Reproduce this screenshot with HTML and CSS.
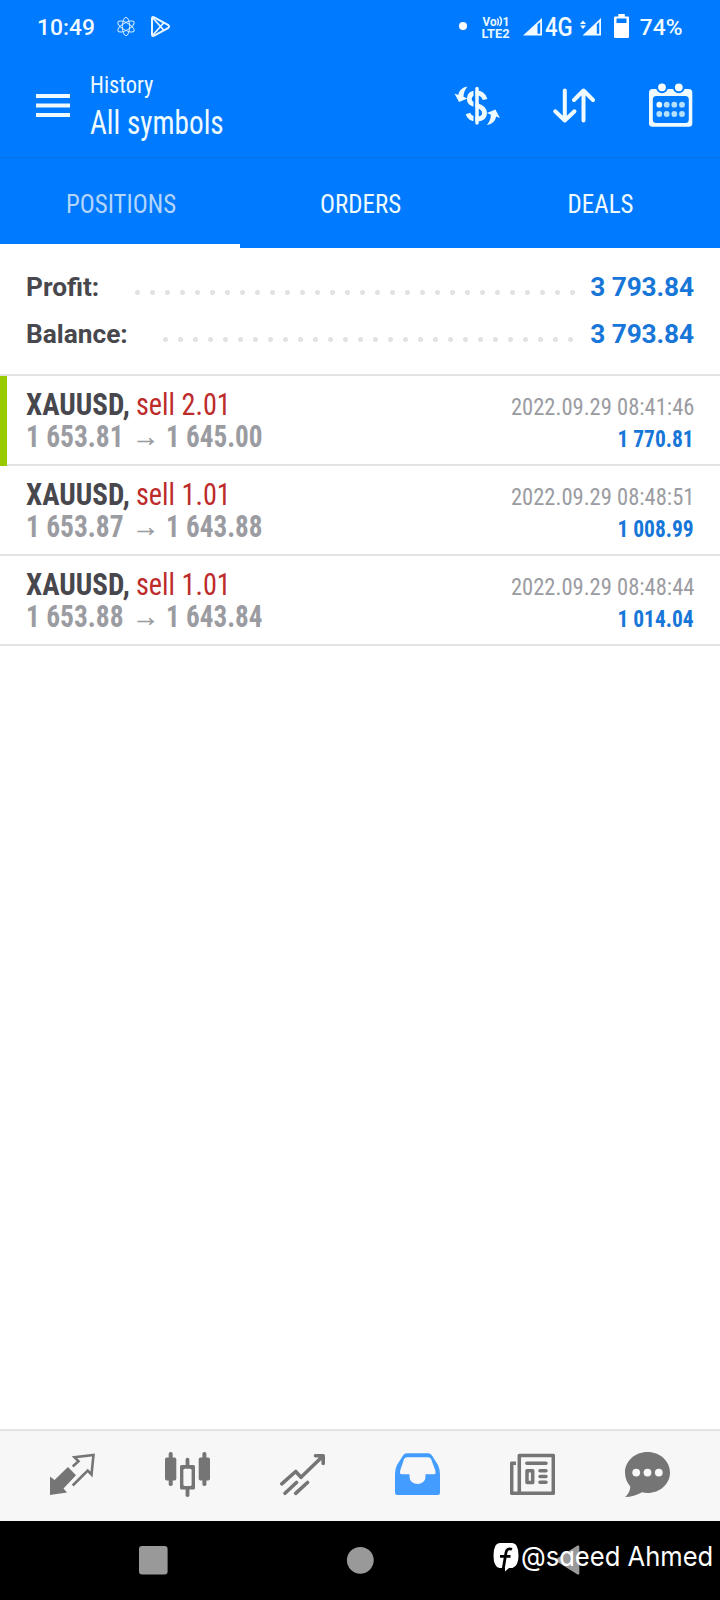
FILE: index.html
```html
<!DOCTYPE html>
<html lang="en">
<head>
<meta charset="utf-8">
<title>History</title>
<link rel="stylesheet" href="styles.css">
</head>
<body>
<div class="screen">
  <div class="status">
    <span class="clock">10:49</span>
    <svg class="atom" width="19" height="54" viewBox="116 0 19 54" fill="none" stroke="#d5ecff" stroke-width="1"><ellipse cx="126" cy="26.5" rx="3.6" ry="9.2"/><ellipse cx="126" cy="26.5" rx="3.6" ry="9.2" transform="rotate(60 126 26.5)"/><ellipse cx="126" cy="26.5" rx="3.6" ry="9.2" transform="rotate(-60 126 26.5)"/></svg>
    <svg class="play" width="21" height="54" viewBox="150 0 21 54" fill="none" stroke="#e8f6ff" stroke-width="2" stroke-linejoin="round"><path d="M152 18.5Q152 16.3 154.200 17.300L168 24.800Q170 26.500 168 28.200L154.200 35.700Q152 36.700 152 34.500Z"/><path d="M153 18L164 30.500M153 35L164 22.500" stroke-width="1.800"/></svg>
    <span class="grow"></span>
    <svg width="8" height="54" viewBox="459 0 8 54"><circle cx="463" cy="26" r="4" fill="#fff"/></svg>
    <svg class="volte" width="28" height="54" viewBox="482 0 28 54" fill="#e8f8ff"><text x="482.500" y="25.800" textLength="14" lengthAdjust="spacingAndGlyphs">Vo</text><path d="M497.300 18.500Q499.500 21.500 497.300 25.500M499.500 16.500Q503.500 21 499.500 26" fill="none" stroke="#e8f8ff" stroke-width="1.500"/><text x="502.500" y="25.800" textLength="7" lengthAdjust="spacingAndGlyphs">1</text><text x="481.500" y="37.500" textLength="28" lengthAdjust="spacingAndGlyphs">LTE2</text></svg>
    <svg class="sig1" width="20" height="54" viewBox="523 0 20 54"><path d="M523 35.500L542 18V35.500Z" fill="#f2fbff"/><path d="M537.500 24.500L540.200 22V33.800H537.500Z" fill="#007aff"/></svg>
    <span class="net"><span>4G</span></span>
    <svg class="sig2" width="22" height="54" viewBox="580 0 22 54"><path d="M582.500 35.500L601 18V35.500Z" fill="#f2fbff"/><path d="M596.800 24.500L599.200 22V33.800H596.800Z" fill="#007aff"/><path d="M580 24L583 20.500L586 24ZM580 25.500L583 29L586 25.500Z" fill="#fff"/></svg>
    <svg class="battery" width="16" height="54" viewBox="614 0 16 54"><path d="M618.300 14h6.500v2.500h3q1.200 0 1.200 1.200v19q0 1.300-1.200 1.300h-12.600q-1.200 0-1.200-1.300v-19q0-1.200 1.200-1.200h3.100z" fill="#fff"/><path d="M616.500 18.500h10v4.500h-10z" fill="#007aff"/></svg>
    <span class="percent">74%</span>
  </div>

  <header class="bar">
    <svg class="menu" width="34" height="24" viewBox="0 0 34 24" fill="#effaff"><path d="M0 0h34v4H0zM0 9.500h34v4H0zM0 19h34v4H0z"/></svg>
    <div class="titles">
      <div class="title-small"><span class="cond">History</span></div>
      <div class="title-big"><span class="cond">All symbols</span></div>
    </div>
    <div class="actions">
      <svg width="48" height="48" viewBox="1 0 48 48" fill="#f0fbff"><path d="M32 18.500C31 13.500 27 12 24 12C19 12 16.300 14 16.300 17.800C16.300 22 19 23 24 24.500C29 26 31.500 28 31.500 32C31.500 36 28.500 38 24 38C19 38 16 36 15 32.500" fill="none" stroke="#f0fbff" stroke-width="4.800"/><path d="M21.500 7V42" stroke="#007aff" stroke-width="2"/><path d="M24 7.500V42" stroke="#f0fbff" stroke-width="3.500" stroke-linecap="round"/><path id="swirl" d="M14.500 5.500C9 6.500 6 9.500 5.300 14L1.500 12.500L6 21L14.500 17.500L10.500 15.800C10.500 12 11.800 9 14.500 5.500Z"/><use href="#swirl" transform="rotate(180 24.200 24.800)"/></svg>
      <svg width="48" height="48" viewBox="0 0 48 48" fill="none" stroke="#f0fbff" stroke-width="4" stroke-linecap="round" stroke-linejoin="round"><path d="M14.800 9.500V39.500M5.200 30.300L14.800 39.500L24.500 30.300M33.500 39.500V9.500M24 19L33.500 9.500L43 19"/></svg>
      <svg width="48" height="48" viewBox=".5 0 48 48"><rect x="2.500" y="8" width="43.300" height="37.700" rx="3.500" fill="#f0fbff"/><rect x="6.300" y="15" width="36" height="27" rx="3.500" fill="#007aff"/><g stroke="#007aff" stroke-width="2" fill="#fff"><circle cx="15.500" cy="6.300" r="4.900"/><circle cx="32.300" cy="6.300" r="4.900"/></g><g fill="#b5e0ff"><circle cx="12.800" cy="23.700" r="2.900" fill="#f4fcff"/><circle cx="20.200" cy="23.700" r="2.900"/><circle cx="27.800" cy="23.700" r="2.900"/><circle cx="35.500" cy="23.700" r="2.900"/><circle cx="12.800" cy="33" r="2.900"/><circle cx="20.200" cy="33" r="2.900"/><circle cx="27.800" cy="33" r="2.900"/><circle cx="35.500" cy="33" r="2.900"/></g></svg>
    </div>
  </header>

  <nav class="tabs">
    <div class="tab active"><span class="cond">POSITIONS</span></div>
    <div class="tab"><span class="cond">ORDERS</span></div>
    <div class="tab"><span class="cond">DEALS</span></div>
  </nav>

  <section class="summary">
    <div class="sum"><span class="label">Profit:</span><span class="dots dots-profit"></span><span class="value">3 793.84</span></div>
    <div class="sum"><span class="label">Balance:</span><span class="dots dots-balance"></span><span class="value">3 793.84</span></div>
  </section>

  <section class="list">
    <div class="deal marked">
      <div class="left">
        <div class="line"><b class="cond symbol">XAUUSD,</b><span class="cond sell">sell 2.01</span></div>
        <div class="line price"><span class="cond open">1 653.81</span><span class="to">→</span><span class="cond">1 645.00</span></div>
      </div>
      <div class="right"><div class="small"><span class="cond">2022.09.29 08:41:46</span></div><div class="small gain"><span class="cond">1 770.81</span></div></div>
    </div>
    <div class="deal">
      <div class="left">
        <div class="line"><b class="cond symbol">XAUUSD,</b><span class="cond sell">sell 1.01</span></div>
        <div class="line price"><span class="cond open">1 653.87</span><span class="to">→</span><span class="cond">1 643.88</span></div>
      </div>
      <div class="right"><div class="small"><span class="cond">2022.09.29 08:48:51</span></div><div class="small gain"><span class="cond">1 008.99</span></div></div>
    </div>
    <div class="deal">
      <div class="left">
        <div class="line"><b class="cond symbol">XAUUSD,</b><span class="cond sell">sell 1.01</span></div>
        <div class="line price"><span class="cond open">1 653.88</span><span class="to">→</span><span class="cond">1 643.84</span></div>
      </div>
      <div class="right"><div class="small"><span class="cond">2022.09.29 08:48:44</span></div><div class="small gain"><span class="cond">1 014.04</span></div></div>
    </div>
  </section>

  <nav class="bottom">
    <div class="item"><svg width="45" height="45" viewBox="0 0 45 45"><path d="M18 15L26 23.300L13.500 36.500L17 40.500L0 43V24.500L4.500 28Z" fill="#757575"/><path d="M22.700 14.500L28.500 9.300L24.500 5.300L43.500 3L41.500 22.500L37.700 18.500L22.700 33.500" fill="none" stroke="#757575" stroke-width="2.600"/></svg></div>
    <div class="item"><svg width="45" height="45" viewBox="0 0 45 45" fill="#757575"><rect y="5.500" width="11.300" height="23" rx="1.800"/><rect x="3.700" width="4" height="34" rx="1.800"/><rect x="33.700" y="5.500" width="11.300" height="23" rx="1.800"/><rect x="37.400" width="4" height="34" rx="1.800"/><rect x="20.600" y="5.700" width="3.800" height="39.300" rx="1.800"/><rect x="15" y="13" width="15" height="24.500" rx="1.500"/><rect x="18.400" y="16.800" width="8.200" height="17.200" rx="1.500" fill="#f7f7f7"/></svg></div>
    <div class="item"><svg width="45" height="45" viewBox="0 0 45 45" fill="none" stroke="#757575" stroke-width="3.600" stroke-linecap="round" stroke-linejoin="round"><path d="M1.800 31.800L15.700 19.500L21 25.300L43 4M35.500 3.700H43.200V11.500M5 41.300L16.500 30.500M15.700 41.300L27.500 30.500"/></svg></div>
    <div class="item"><svg width="45" height="45" viewBox="0 0 45 45"><path d="M11.500 1.300H33.500Q36 1.300 37.300 4L43 13Q45 17 45 22V40.500Q45 43 42.500 43H2.500Q0 43 0 40.500V22Q0 17 2 13L7.700 4Q9 1.300 11.500 1.300Z" fill="#439cff"/><path d="M12 5.300H33Q35.300 5.300 36.200 7.300L40.300 18.500Q41 22.200 39.500 22.200H30.500V25A8 7 0 0 1 14.500 25V22.200H6.300Q4.500 22.200 5.200 18.500L9 7.300Q9.800 5.300 12 5.300Z" fill="#f7f7f7"/></svg></div>
    <div class="item"><svg width="45" height="45" viewBox="0 0 45 45" fill="none" stroke="#757575" stroke-width="3.500" stroke-linejoin="round"><rect x="9.300" y="3.600" width="34" height="37.700"/><path d="M6 11.200H1.700V41.300H9"/><g stroke-linecap="round"><path d="M16.800 11.300H36M30 18.700H36M30 24.500H36M30 30.300H36"/><rect x="17" y="18.700" width="5.700" height="11.700"/></g></svg></div>
    <div class="item"><svg width="45" height="45" viewBox="0 0 45 45"><path d="M22.500 0C35 0 45 9 45 20.500S35 41 22.500 41Q19.500 41 17 40.300Q9 45 0 45Q5 41 5.300 34.500Q0 28.500 0 20.500C0 9 10 0 22.500 0Z" fill="#757575"/><g fill="#f7f7f7"><circle cx="11.200" cy="20.600" r="3.900"/><circle cx="22.500" cy="20.600" r="3.900"/><circle cx="33.800" cy="20.600" r="3.900"/></g></svg></div>
  </nav>

  <div class="system">
    <div class="key"><svg width="30" height="30" viewBox="0 0 30 30"><rect x="1" y="1" width="28.600" height="28.600" rx="3" fill="#999"/></svg></div>
    <div class="key"><svg width="30" height="30" viewBox="0 0 30 30"><circle cx="15.300" cy="15.300" r="13.400" fill="#999"/></svg></div>
    <div class="key"><svg width="30" height="30" viewBox="0 0 30 30"><path d="M2.500 15L25.500 .500Q27.300 0 27.300 1.500V28.500Q27.300 30 25.500 29.500Z" fill="#999"/></svg></div>
    <div class="mark">
      <svg width="26" height="30" viewBox="0 0 26 30"><path d="M6.500 0H19.500Q25.500 .500 25.500 12.500Q25.500 23 19.500 25H16L12 28.500L12 25H6.500Q.500 24 .500 12.500Q.500 .500 6.500 0Z" fill="#fff"/><path d="M19 6.300Q14 4.500 13 9.500L10.300 25.500M7 13.300H17.500" fill="none" stroke="#000" stroke-width="2.800"/></svg>
      <span>@saeed Ahmed</span>
    </div>
  </div>
</div>
</body>
</html>
```
FILE: styles.css
```css
body { margin: 0; background: #fff; font-family: Roboto, sans-serif; }
svg { display: block; flex: none; }
.screen { width: 720px; height: 1600px; display: flex; flex-direction: column; overflow: hidden; }
.cond { display: inline-block; font-family: "Roboto Condensed", Roboto, sans-serif; font-stretch: 75%; white-space: nowrap; transform: scaleX(.92); transform-origin: 0 50%; }
.status { height: 54px; background: #007aff; color: #f2fbff; display: flex; line-height: 55px; font-size: 22.8px; font-weight: 500; padding: 0 37.5px 0 37px; white-space: nowrap; }
.clock { width: 79px; }
.play { margin-left: 15px; }
.grow { flex: 1; }
.volte { margin-left: 15px; font-size: 13px; font-weight: 700; }
.sig1 { margin-left: 13px; }
.net { width: 30px; margin-left: 2px; font-size: 25.5px; }
.net span { display: inline-block; transform: scaleX(.87); transform-origin: 0 50%; }
.sig2 { margin-left: 5px; }
.battery { margin-left: 12px; }
.percent { margin-left: 10px; }
.bar { height: 103px; background: #007aff; display: flex; border-bottom: 1px solid #0873e8; color: #effaff; }
.menu { margin: 40px 20px 0 36px; }
.titles { flex: 1; padding-top: 14px; font-weight: 450; }
.title-small { font-size: 24.4px; line-height: 34px; }
.title-big { font-size: 32.5px; line-height: 43px; }
.title-big .cond { transform: scaleX(.9); }
.actions { display: flex; gap: 48.5px; padding: 27px 25.5px 0 0; }
.tabs { height: 90px; background: #007aff; display: flex; color: #effaff; }
.tab { flex: 1; box-sizing: border-box; padding-top: 3px; line-height: 87px; font-size: 26.4px; text-align: center; font-weight: 430; }
.tab .cond { transform: translateX(.7px) scaleX(.945); transform-origin: 50% 50%; }
.tab.active { color: #b4d5fb; border-bottom: 4px solid #fff; }
.summary { height: 110px; padding: 16px 26px 0; border-bottom: 2px solid #e3e3e3; }
.sum { display: flex; line-height: 46.5px; font-size: 26.25px; font-weight: 700; color: #47474d; }
.dots { height: 15px; margin: 21px 10px 0 auto; background: radial-gradient(circle at 7.5px 7.5px, #e3e3e3 2.2px, transparent 2.8px) 0 0 / 15px 15px; }
.dots-profit { width: 450px; }
.dots-balance { width: 420px; margin-right: 12px; }
.value { color: #1776d8; letter-spacing: -.1px; }
.deal { height: 88px; border-bottom: 2px solid #e3e3e3; display: flex; justify-content: space-between; padding: 0 26px; position: relative; }
.marked::before { content: ""; position: absolute; left: 0; top: 0; width: 7.4px; height: 90px; background: #9c0; }
.left { padding-top: 12.5px; }
.line { height: 32px; line-height: 32px; font-size: 30.5px; color: #47474d; display: flex; }
.symbol { width: 109.5px; transform: scaleX(.95); }
.sell { color: #bd2b2b; transform: scaleX(.925); font-weight: 430; }
.price { color: #9b9ca2; font-weight: 700; }
.price .cond { transform: scaleX(.89); }
.price .open { width: 106px; transform: scaleX(.9); }
.to { width: 34px; font: 400 27px/32px "Liberation Sans", sans-serif; -webkit-text-stroke: .5px #9b9ca2; }
.right { padding-top: 14.5px; text-align: right; }
.small { height: 32px; line-height: 32px; font-size: 24.4px; color: #9b9ca2; }
.small .cond { transform: scaleX(.925); transform-origin: 100% 50%; }
.gain { color: #1776d8; font-weight: 700; }
.gain .cond { transform: scaleX(.88); }
.bottom { margin-top: auto; height: 90px; border-top: 2px solid #e3e3e3; background: #f7f7f7; display: flex; padding: 0 15px; }
.item { flex: 1; padding: 21px 0 0 35px; }
.system { height: 79px; background: #000; display: flex; padding: 0 50px; position: relative; }
.key { flex: 1; display: flex; justify-content: center; padding-top: 24px; }
.mark { position: absolute; left: 493px; top: 22px; display: flex; color: #fff; white-space: nowrap; }
.mark span { margin-left: 2px; width: 192px; font: 400 27.5px/27px Inter, sans-serif; font-feature-settings: "cv11"; transform: scaleX(.93); transform-origin: 0 50%; }
```
